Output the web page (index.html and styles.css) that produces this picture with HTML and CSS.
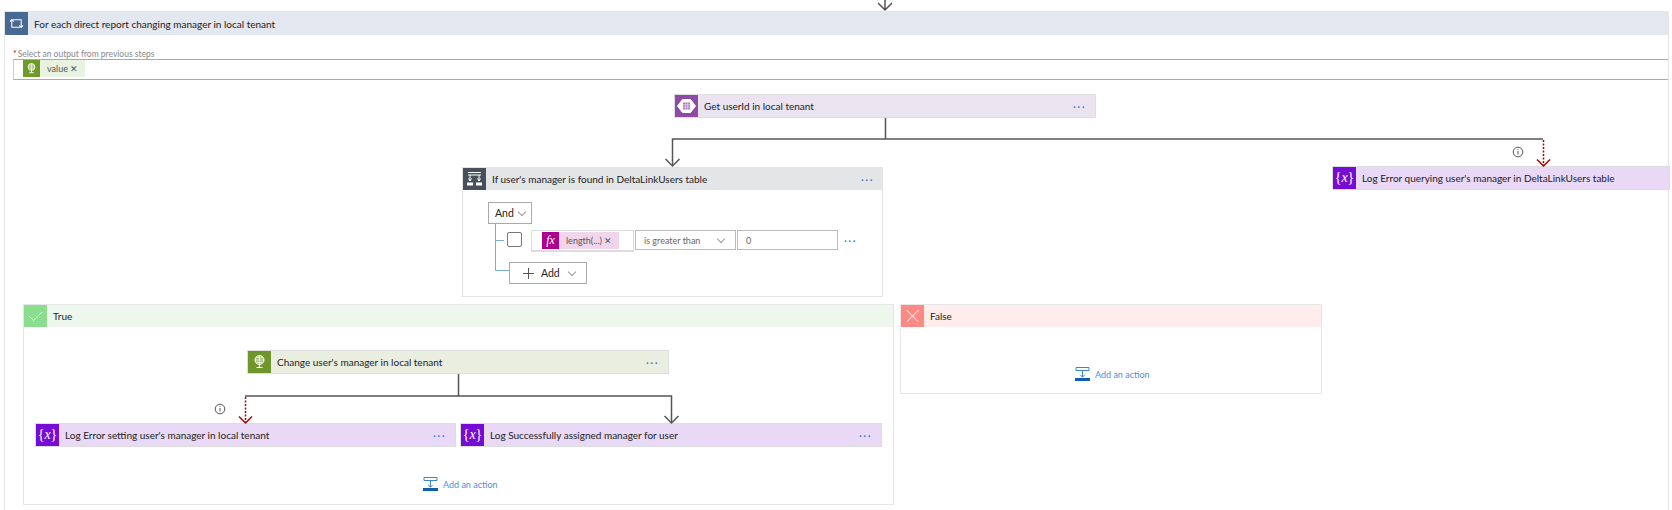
FILE: index.html
```html
<!DOCTYPE html>
<html lang="en">

<head>
    <meta charset="UTF-8">
    <meta name="viewport" content="width=device-width, initial-scale=1.0">
    <title>For each direct report changing manager in local tenant</title>
    <link rel="stylesheet" href="styles.css">
</head>

<body>
    <svg width="0" height="0" class="defs">
        <defs>
            <symbol id="i-loop" viewBox="0 0 22 22">
                <path d="M7.5 7.5H15.5V14.5M14.5 14.5H6.5V7.5" fill="none" stroke="#fff" stroke-width="1"/>
                <path d="M4.8 9.2L6.5 7.2L8.2 9.2M13.8 12.8L15.5 14.8L17.2 12.8" fill="none" stroke="#fff" stroke-width="1"/>
            </symbol>
            <symbol id="i-bulb" viewBox="0 0 22 22">
                <circle cx="11" cy="9" r="4.5" fill="#fff" fill-opacity=".35" stroke="#fff"/>
                <path d="M6.5 9H15.5M11 4.5V13.5M8 6.5H14M8 11.5H14" stroke="#fff" stroke-width=".7"/>
                <path d="M11 13.5V16M8 16.5H14" stroke="#fff" stroke-width="1.2"/>
            </symbol>
            <symbol id="i-table" viewBox="0 0 22 22">
                <path d="M7 4.5H15L20 11L15 17.5H7L2 11Z" fill="#fff" stroke="#fff" stroke-linejoin="round"/>
                <path d="M7.5 7.5H14.5V14.5H7.5Z" fill="#a87cb9"/>
                <path d="M7.5 9.8H14.5M7.5 12.2H14.5M9.8 7.5V14.5M12.2 7.5V14.5" stroke="#fff" stroke-width=".5"/>
            </symbol>
            <symbol id="i-cond" viewBox="0 0 22 22">
                <path d="M4.5 4.5H17.5M4.5 7H17.5" stroke="#fff"/>
                <path d="M6.5 7V13M15.5 7V13M5 10.5L6.5 13L8 10.5M14 10.5L15.5 13L17 10.5" fill="none" stroke="#fff"/>
                <path d="M3.5 14.5H9.5V17.5H3.5ZM12.5 14.5H18.5V17.5H12.5Z" fill="#fff"/>
            </symbol>
            <symbol id="i-add" viewBox="0 0 15 14">
                <path d="M1 .5H14V3.5H1Z" fill="none" stroke="#3a85cf"/>
                <path d="M7.5 3.5V10M5.2 7.8L7.5 10.2L9.8 7.8" fill="none" stroke="#3a85cf"/>
                <path d="M0 11H15V14H0Z" fill="#0f5fb0"/>
            </symbol>
            <symbol id="i-info" viewBox="0 0 12 12">
                <circle cx="6" cy="6" r="4.8" fill="none" stroke="#555"/>
                <path d="M6 5V8.6" stroke="#555"/>
                <circle cx="6" cy="3.5" r=".6" fill="#555"/>
            </symbol>
        </defs>
    </svg>

    <main class="canvas">
        <section class="scope">
            <header class="scope-head">
                <span class="icon icon-loop"><svg><use href="#i-loop"/></svg></span>
                <span class="title">For each direct report changing manager in local tenant</span>
            </header>
            <div class="field">
                <label class="field-label"><em>*</em>Select an output from previous steps</label>
                <div class="field-box">
                    <span class="chip chip-green">
                        <span class="chip-icon chip-icon-green"><svg><use href="#i-bulb"/></svg></span>
                        <span class="chip-text">value</span>
                        <span class="chip-x">&#10005;</span>
                    </span>
                </div>
            </div>
        </section>

        <div class="card card-data get-user">
            <span class="icon icon-data"><svg><use href="#i-table"/></svg></span>
            <span class="title">Get userId in local tenant</span>
            <span class="dots">&middot;&middot;&middot;</span>
        </div>

        <section class="condition">
            <header class="card card-cond">
                <span class="icon icon-cond"><svg><use href="#i-cond"/></svg></span>
                <span class="title">If user's manager is found in DeltaLinkUsers table</span>
                <span class="dots">&middot;&middot;&middot;</span>
            </header>
            <div class="rules">
                <div class="select-and">And <i class="chev"></i></div>
                <div class="rule">
                    <span class="check"></span>
                    <div class="token-box">
                        <span class="chip chip-pink">
                            <span class="chip-icon chip-icon-pink">fx</span>
                            <span class="chip-text">length(...)</span>
                            <span class="chip-x">&#10005;</span>
                        </span>
                    </div>
                    <div class="rule-box rule-op">is greater than <i class="chev"></i></div>
                    <div class="rule-box">0</div>
                    <span class="dots">&middot;&middot;&middot;</span>
                </div>
                <div class="add-btn"><span class="plus"></span>Add <i class="chev"></i></div>
            </div>
        </section>

        <div class="card card-var log-query">
            <span class="icon icon-var">{<i>x</i>}</span>
            <span class="title">Log Error querying user's manager in DeltaLinkUsers table</span>
        </div>

        <section class="branch branch-true">
            <header class="branch-head">
                <span class="icon icon-true">
                    <svg viewBox="0 0 22 22"><path d="M5 11.5L9 15.5L17.5 7" fill="none" stroke="#fff"/></svg>
                </span>
                <span class="title">True</span>
            </header>
        </section>

        <section class="branch branch-false">
            <header class="branch-head">
                <span class="icon icon-false">
                    <svg viewBox="0 0 22 22"><path d="M5 5L17 17M17 5L5 17" fill="none" stroke="#fff"/></svg>
                </span>
                <span class="title">False</span>
            </header>
        </section>

        <div class="card card-api change-mgr">
            <span class="icon icon-api"><svg><use href="#i-bulb"/></svg></span>
            <span class="title">Change user's manager in local tenant</span>
            <span class="dots">&middot;&middot;&middot;</span>
        </div>

        <div class="card card-var log-set">
            <span class="icon icon-var">{<i>x</i>}</span>
            <span class="title">Log Error setting user's manager in local tenant</span>
            <span class="dots">&middot;&middot;&middot;</span>
        </div>

        <div class="card card-var log-ok">
            <span class="icon icon-var">{<i>x</i>}</span>
            <span class="title">Log Successfully assigned manager for user</span>
            <span class="dots">&middot;&middot;&middot;</span>
        </div>

        <a class="add-action add-true"><svg><use href="#i-add"/></svg>Add an action</a>
        <a class="add-action add-false"><svg><use href="#i-add"/></svg>Add an action</a>

        <!-- connectors, drawn over the nodes -->
        <svg class="wires" width="1672" height="510">
            <g fill="none" stroke="#555" stroke-width="1.5">
                <path d="M885 0V10M878 3L885 10L892 3"/>
                <path d="M885.5 118V139M672.5 165V139H1543"/>
                <path d="M665.5 159L672.5 166L679.5 159"/>
                <path d="M458.5 374V396M245 396H671.5V422"/>
                <path d="M664.5 416L671.5 423L678.5 416"/>
            </g>
            <g fill="none" stroke="#a80000" stroke-width="1.5">
                <path d="M1543.5 140V165M245.5 397V422" stroke-dasharray="2 1.5"/>
                <path d="M1537 159.5L1543.5 166L1550 159.5M239 416.5L245.5 423L252 416.5"/>
            </g>
            <g fill="none" stroke="#7aa9dc" stroke-width="1">
                <path d="M495.5 224V270.5H509M495.5 240.5H504"/>
            </g>
            <use href="#i-info" x="1512" y="146" width="12" height="12"/>
            <use href="#i-info" x="214" y="403" width="12" height="12"/>
        </svg>
    </main>
</body>

</html>
```

FILE: styles.css
```css
* {
    margin: 0;
    padding: 0;
    box-sizing: border-box;
}

body {
    font-family: Lato, "Open Sans", sans-serif;
    font-size: 10px;
    color: #222;
    background-color: #fff;
}

.defs {
    position: absolute;
}

/* free canvas: every node sits at its place in the flow diagram */
.canvas {
    position: relative;
    width: 1672px;
    height: 510px;
    overflow: hidden;
}

.wires {
    position: absolute;
    left: 0;
    top: 0;
    pointer-events: none;
}

.icon {
    flex: none;
    width: 23px;
    height: 22px;
    display: flex;
    align-items: center;
    justify-content: center;
    color: #fff;
}

.icon svg,
.chip-icon svg {
    width: 100%;
    height: 100%;
}

.title {
    margin-left: 6px;
    white-space: nowrap;
}

.dots {
    margin-left: auto;
    color: #2a7fd0;
    font-size: 11px;
    letter-spacing: 1.5px;
    line-height: 1;
}

/* for each scope */
.scope {
    position: absolute;
    left: 4px;
    top: 11px;
    width: 1665px;
    height: 520px;
    border: 1px solid #e6e6e6;
    border-bottom: 0;
}

.scope-head {
    display: flex;
    align-items: center;
    height: 23px;
    background-color: #e3e7ef;
}

.icon-loop {
    background-color: #486991;
    height: 23px;
}

.field {
    padding: 14px 0 0 8px;
}

.field-label {
    display: block;
    height: 10px;
    font-size: 8.5px;
    line-height: 10px;
    color: #888;
}

.field-label em {
    margin-right: 1px;
    color: #d00;
    font-style: normal;
}

.field-box {
    display: flex;
    height: 21px;
    padding-left: 9px;
    border: 1px solid #ccc;
    border-top-color: #aaa;
    border-bottom-color: #aaa;
    border-right: 0;
}

.chip {
    display: inline-flex;
    align-items: center;
    height: 17px;
    font-size: 9px;
    color: #555;
}

.chip-green {
    background-color: #e9f1e0;
    padding-right: 7px;
}

.chip-pink {
    background-color: #f1d5ea;
    padding-right: 7px;
}

.chip-icon {
    width: 17px;
    height: 17px;
    display: flex;
    align-items: center;
    justify-content: center;
    color: #fff;
}

.chip-icon-green {
    background-color: #6f9a27;
}

.chip-icon-pink {
    background-color: #ad008c;
    font-family: "Liberation Serif", serif;
    font-style: italic;
    font-size: 12px;
}

.chip-text {
    margin: 0 2px 0 7px;
}

.chip-x {
    font-size: 9px;
}

/* action cards */
.card {
    display: flex;
    align-items: center;
    height: 24px;
    padding-right: 9px;
    border: 1px solid #dedede;
}

.get-user,
.change-mgr,
.log-query,
.log-set,
.log-ok {
    position: absolute;
}

.card-data {
    background-color: #ebe4f0;
}

.icon-data {
    background-color: #8d4ba3;
}

.card-var {
    background-color: #e9d9f6;
    border-color: #ddd;
}

.icon-var {
    background-color: #770bd6;
    font-family: "Liberation Serif", serif;
    font-size: 14px;
}

.card-api {
    background-color: #e9eee0;
}

.icon-api {
    background-color: #6f962a;
}

.get-user {
    left: 674px;
    top: 94px;
    width: 422px;
}

.log-query {
    left: 1332px;
    top: 166px;
    width: 338px;
}

.change-mgr {
    left: 247px;
    top: 350px;
    width: 422px;
}

.log-set {
    left: 35px;
    top: 423px;
    width: 421px;
}

.log-ok {
    left: 460px;
    top: 423px;
    width: 422px;
}

/* condition */
.condition {
    position: absolute;
    left: 462px;
    top: 167px;
    width: 421px;
    height: 130px;
    border: 1px solid #e2e2e2;
}

.card-cond {
    height: 22px;
    padding-right: 8px;
    border: 0;
    background-color: #e4e5e7;
}

.icon-cond {
    background-color: #474f5c;
}

.rules {
    padding: 12px 0 0 25px;
}

.select-and {
    display: flex;
    align-items: center;
    justify-content: space-between;
    width: 44px;
    height: 22px;
    padding: 0 6px;
    border: 1px solid #aaa;
    font-size: 10.5px;
}

.chev {
    display: block;
    width: 6px;
    height: 6px;
    margin-top: -3px;
    border-right: 1px solid #999;
    border-bottom: 1px solid #999;
    transform: rotate(45deg);
}

.rule {
    display: flex;
    align-items: flex-start;
    height: 32px;
    margin-top: 6px;
    padding-left: 19px;
}

.check {
    width: 15px;
    height: 15px;
    margin: 2px 9px 0 0;
    border: 1px solid #777;
    border-radius: 2px;
}

.token-box {
    width: 103px;
    height: 22px;
    padding: 1px 0 0 10px;
    border: 1px solid #ddd;
    border-bottom-width: 2px;
}

.rule-box {
    display: flex;
    align-items: center;
    width: 101px;
    height: 20px;
    margin-left: 1px;
    padding: 0 8px;
    border: 1px solid #bbb;
    font-size: 9px;
    color: #666;
}

.rule-op {
    justify-content: space-between;
    margin-left: 1px;
    padding-right: 11px;
}

.rule .dots {
    margin: 5px 0 0 6px;
}

.add-btn {
    display: flex;
    align-items: center;
    width: 78px;
    height: 22px;
    margin-left: 21px;
    padding-left: 13px;
    border: 1px solid #aaa;
    font-size: 10.5px;
}

.plus {
    position: relative;
    width: 11px;
    height: 11px;
    margin-right: 7px;
    background: linear-gradient(#555, #555) center / 100% 1px no-repeat,
        linear-gradient(#555, #555) center / 1px 100% no-repeat;
}

.add-btn .chev {
    margin-left: 9px;
}

/* branches */
.branch {
    position: absolute;
    top: 304px;
    border: 1px solid #e6e6e6;
}

.branch-head {
    display: flex;
    align-items: center;
    height: 22px;
}

.branch-true {
    left: 23px;
    width: 871px;
    height: 201px;
}

.branch-true .branch-head {
    background-color: #edf7ee;
}

.icon-true {
    background-color: #8ade8f;
}

.branch-false {
    left: 900px;
    width: 422px;
    height: 90px;
}

.branch-false .branch-head {
    background-color: #ffeded;
}

.icon-false {
    background-color: #ff8a84;
}

/* add an action links */
.add-action {
    position: absolute;
    display: flex;
    align-items: center;
    gap: 5px;
    font-size: 9px;
    color: #4a90d9;
    white-space: nowrap;
}

.add-action svg {
    width: 15px;
    height: 14px;
}

.add-true {
    left: 423px;
    top: 477px;
}

.add-false {
    left: 1075px;
    top: 367px;
}
```
